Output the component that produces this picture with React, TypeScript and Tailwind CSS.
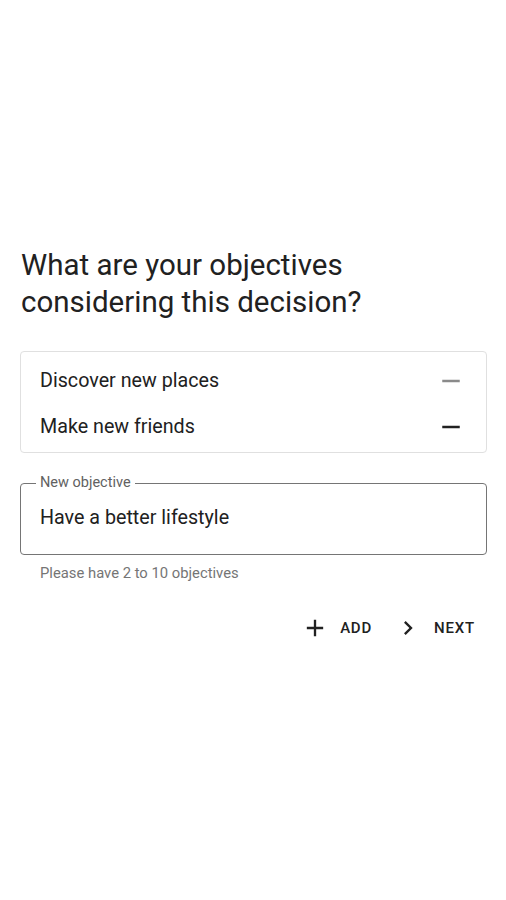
import React from "react";

function Minus({ light }: { light?: boolean }) {
  return (
    <svg width="30" height="30" viewBox="0 0 24 24" className={light ? "text-[#8a8a8a]" : "text-[#212121]"}>
      <path d="M19 13H5v-2h14v2z" fill="currentColor" />
    </svg>
  );
}

export default function App() {
  return (
    <div className="w-[506px] h-[900px] bg-white flex flex-col" style={{ fontFamily: "Roboto, 'Noto Sans', sans-serif" }}>
      <div className="pt-[247px] pl-5 pr-[19px]">
        <h1 className="text-[29.5px] leading-[37px] text-[#212121] pl-px">
          What are your objectives
          <br />
          considering this decision?
        </h1>
        <div className="mt-[30px] border border-[#e0e0e0] rounded-[4px] pt-[6px] pb-[2px]">
          <div className="flex items-center justify-between pl-[19px] pr-[20px] h-[46px]">
            <span className="text-[19.7px] text-[#212121]">Discover new places</span>
            <Minus light />
          </div>
          <div className="flex items-center justify-between pl-[19px] pr-[20px] h-[46px]">
            <span className="text-[19.7px] text-[#212121]">Make new friends</span>
            <Minus />
          </div>
        </div>
        <div className="mt-[30px] relative border border-[#757575] rounded-[4px] h-[72px]">
          <span className="absolute -top-[9px] left-[15px] bg-white px-[4px] text-[14.5px] leading-[16px] text-[#616161]">New objective</span>
          <div className="pl-[19px] pt-[22px] text-[19.7px] leading-[24px] text-[#212121]">Have a better lifestyle</div>
        </div>
        <div className="pl-[20px] mt-[9px] text-[14.8px] leading-[18px] text-[#757575]">Please have 2 to 10 objectives</div>
        <div className="mt-[32px] flex justify-end items-center pr-[12px] h-[28px]">
          <div className="flex items-center gap-[11px]">
            <svg width="28" height="28" viewBox="0 0 24 24"><path d="M19 13h-6v6h-2v-6H5v-2h6V5h2v6h6v2z" fill="#212121" /></svg>
            <span className="text-[15px] font-medium tracking-[0.8px] text-[#212121]">ADD</span>
          </div>
          <div className="flex items-center gap-[12px] ml-[22px]">
            <svg width="28" height="28" viewBox="0 0 24 24"><path d="M10 6L8.59 7.41 13.17 12l-4.58 4.59L10 18l6-6z" fill="#212121" /></svg>
            <span className="text-[15px] font-medium tracking-[0.8px] text-[#212121]">NEXT</span>
          </div>
        </div>
      </div>
    </div>
  );
}
